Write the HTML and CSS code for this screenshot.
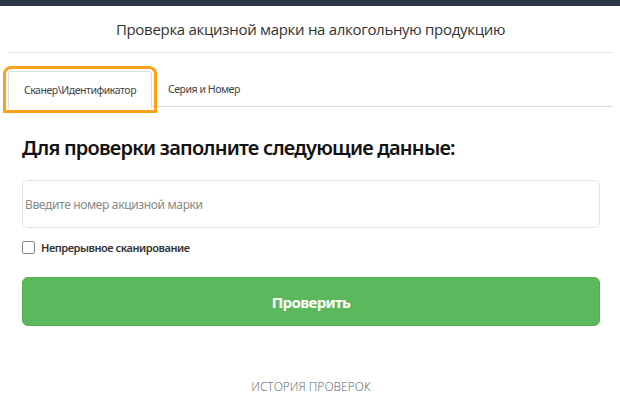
FILE: index.html
```html
<!DOCTYPE html>
<html lang="ru">
<head>
<meta charset="utf-8">
<link rel="stylesheet" href="styles.css">
</head>
<body>
<div class="topbar"></div>
<div class="page">
  <h1 class="title">Проверка акцизной марки на алкогольную продукцию</h1>
  <div class="tabs">
    <div class="tab active">Сканер\Идентификатор</div>
    <div class="tab">Серия и Номер</div>
  </div>
  <div class="panel">
    <h2 class="heading">Для проверки заполните следующие данные:</h2>
    <input class="field" type="text" placeholder="Введите номер акцизной марки">
    <label class="check"><span class="box"></span>Непрерывное сканирование</label>
    <button class="btn">Проверить</button>
    <div class="history">ИСТОРИЯ ПРОВЕРОК</div>
  </div>
</div>
</body>
</html>
```
FILE: styles.css
```css
* { box-sizing: border-box; }
body {
  margin: 0;
  background: #fff;
  font-family: "Noto Sans", "Open Sans", sans-serif;
  color: #333;
}
.topbar {
  height: 6px;
  background: #2d3648;
}
.page {
  padding: 0 7px 0 8px;
}
.title {
  margin: 0;
  height: 47px;
  display: flex;
  align-items: center;
  justify-content: center;
  font-family: "Open Sans", sans-serif;
  font-weight: 400;
  font-size: 15px;
  letter-spacing: -0.3px;
  color: #333;
  border-bottom: 1px solid #eaeaea;
}
.tabs {
  display: flex;
  margin-top: 18px;
  border-bottom: 1px solid #ddd;
  height: 36px;
}
.tab {
  height: 36px;
  display: flex;
  align-items: center;
  padding: 0 15px;
  font-size: 10.5px;
  letter-spacing: -0.45px;
  color: #444;
  border: 1px solid transparent;
  border-radius: 3px 3px 0 0;
}
.tab.active {
  width: 144px;
  justify-content: center;
  border-color: #ddd #ddd #fff;
  background: #fff;
  outline: 3px solid #ff9f1a;
  outline-offset: 2px;
  margin-bottom: -1px;
  height: 37px;
}
.panel {
  padding: 0 13px 0 14px;
}
.heading {
  margin: 27px 0 0;
  font-size: 20px;
  font-weight: 600;
  color: #111;
  line-height: 28px;
  letter-spacing: -0.78px;
}
.field {
  display: block;
  width: 100%;
  height: 48px;
  margin-top: 18px;
  border: 1px solid #e4e4e4;
  border-radius: 6px;
  padding: 0 2px;
  font-family: inherit;
  font-size: 12px;
  letter-spacing: -0.35px;
  color: #333;
  outline: none;
}
.field::placeholder { color: #888; }
.check {
  display: flex;
  align-items: center;
  gap: 6px;
  margin-top: 12px;
  font-size: 11px;
  font-weight: 600;
  letter-spacing: -0.45px;
  color: #333;
}
.box {
  width: 13px;
  height: 13px;
  border: 1px solid #888;
  border-radius: 2px;
  background: #fff;
}
.btn {
  display: block;
  width: 100%;
  height: 49px;
  margin-top: 22px;
  border: 1px solid #53ad53;
  border-radius: 6px;
  background: #5cb85c;
  color: #fff;
  font-family: inherit;
  font-size: 15px;
  font-weight: 700;
  letter-spacing: -0.6px;
}
.history {
  margin-top: 52px;
  text-align: center;
  font-family: "Open Sans", sans-serif;
  font-size: 12px;
  font-weight: 300;
  color: #56606a;
}
```
